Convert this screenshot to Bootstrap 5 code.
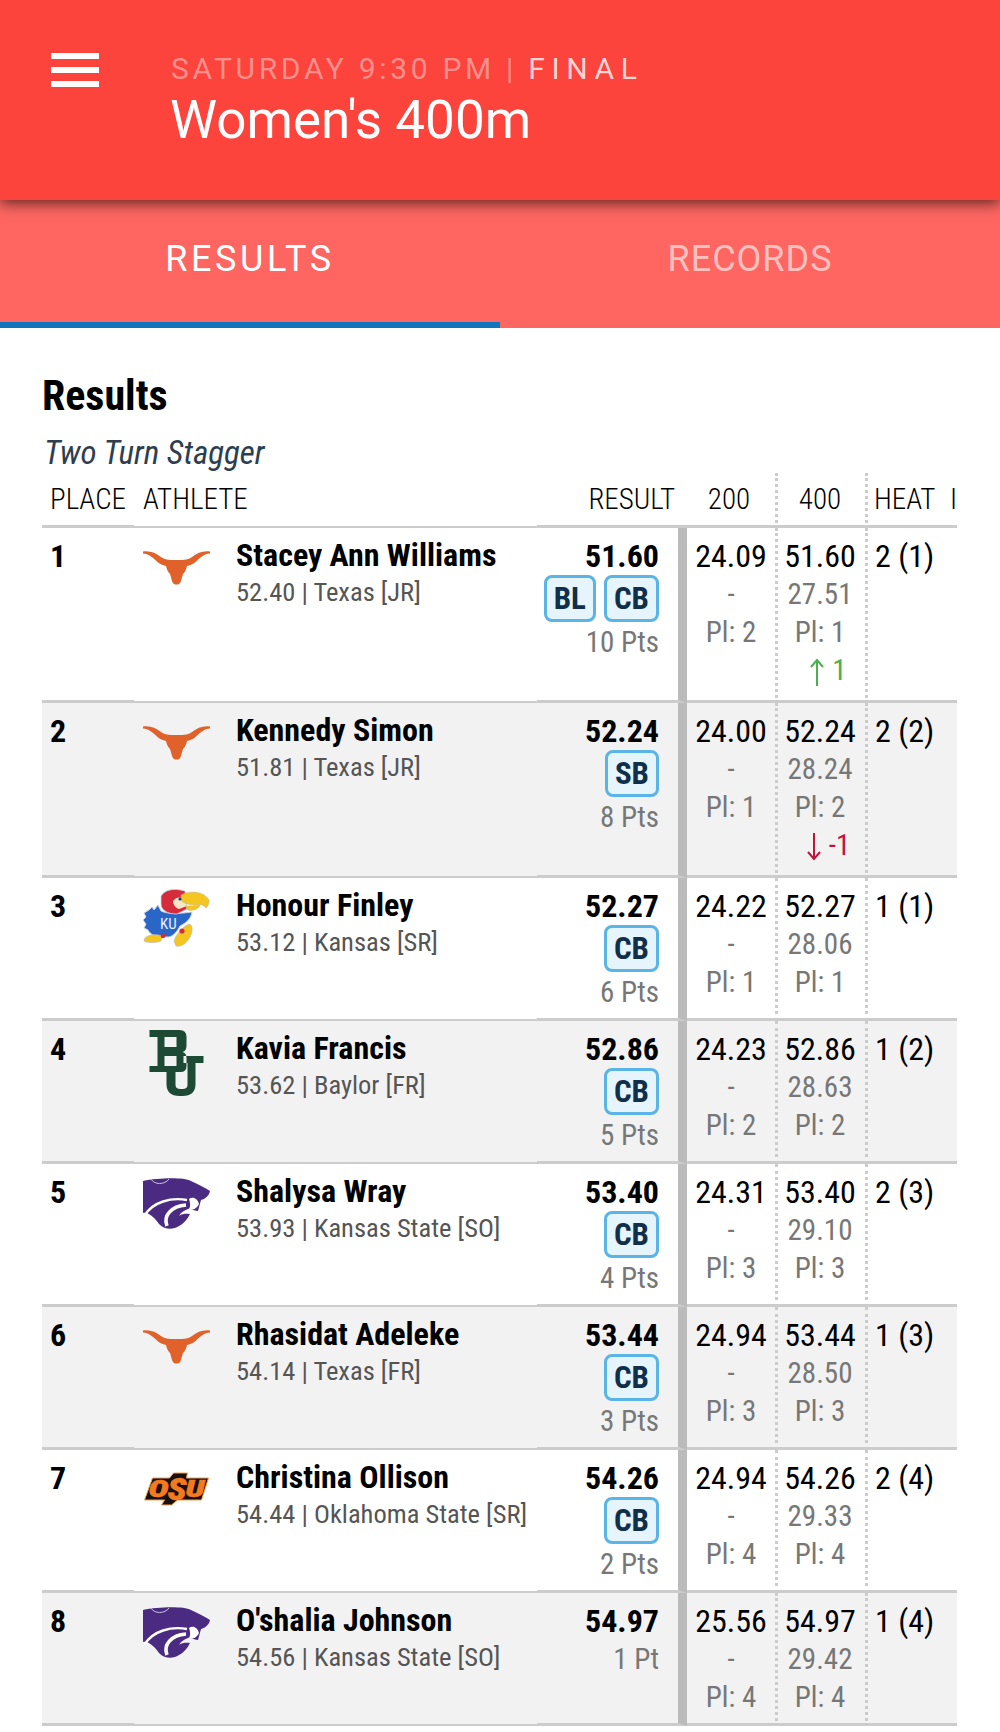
<!doctype html>
<html lang="en">
<head>
<meta charset="utf-8">
<title>Women's 400m</title>
<link href="https://cdn.jsdelivr.net/npm/bootstrap@5.3.0/dist/css/bootstrap.min.css" rel="stylesheet">
<style>
body{background:#fff;font-family:"Roboto Condensed",Roboto,sans-serif;font-stretch:75%;color:#000;}
.appbar{background:#fc433c;height:200px;position:relative;z-index:2;box-shadow:0 3px 14px rgba(0,0,0,.65);font-family:Roboto,sans-serif;font-stretch:100%;color:#fff;}
.burger{width:48px;margin:53px 0 0 51px;gap:8px;flex:none;}
.burger i{display:block;height:6px;background:#fff;}
.apptext{margin-left:72px;padding-top:51px;}
.kick{font-size:30px;line-height:36px;letter-spacing:3.7px;color:rgba(255,255,255,.42);}
.kick b{font-weight:400;color:rgba(255,255,255,.78);letter-spacing:6.6px;}
.ttl{font-size:53px;line-height:60px;color:#fff;margin-top:3px;margin-left:-1px;}
.tabbar{background:#ff6661;height:128px;font-family:Roboto,sans-serif;font-stretch:100%;}
.tabbar .nav-link{height:128px;padding:35px 0 0;font-size:36px;line-height:48px;letter-spacing:1px;color:rgba(255,255,255,.6);border-bottom:6px solid transparent;}
.tabbar .nav-link.active{color:#fff;letter-spacing:3.6px;border-bottom-color:#0f75bd;}
.pagebody{padding:44px 42px 0;}
.rhead{font-size:42px;line-height:48px;font-weight:700;margin:0;}
.rsub{font-size:33px;line-height:40px;font-style:italic;color:#2c3e50;margin:13px 0 0 2px;}
.tclip{overflow:hidden;width:915px;}
.rtab{table-layout:fixed;width:974px;border-collapse:separate;border-spacing:0;margin:0;font-size:32px;}
.rtab th,.rtab td{padding:0;background:transparent;box-shadow:none;vertical-align:top;border-bottom:3px solid #ccc;color:#000;}
.rtab th{font-weight:300;font-size:29px;line-height:36px;height:55px;padding-top:8px;}
.rtab td{line-height:40px;padding-top:8px;padding-bottom:7px;}
.rtab tr:nth-child(even) td{background:#f2f2f2;}
.rtab .ca{width:92px;padding-left:8px;}
.rtab .cb{width:403px;padding-left:9px;border-bottom-width:2px;}
.rtab .cc{width:150px;text-align:right;padding-right:19px;border-right:9px solid #bbb;}
.rtab th.cc{border-right:0;padding-right:12px;}
.rtab .cd{width:88px;text-align:center;}
.rtab th.cd{padding-right:4px;}
.rtab .ce{width:90px;text-align:center;border-left:3px dotted #ccc;padding-right:3px;}
.rtab th.ce{padding-right:3px;}
.rtab .cf{width:85px;padding-left:7px;border-left:3px dotted #ccc;}
.rtab th.cf{padding-left:6px;}
.rtab .cg{width:66px;}
.rtab td.ca{font-weight:700;}
.ath{gap:26px;}
.crest{width:67px;flex:none;display:block;margin-top:15px;}
.crest.kj{margin-top:3px;}
.crest.bay{margin-top:0;}
.crest.wc{margin-top:6px;}
.crest.os{margin-top:14px;}
.nm{font-weight:700;line-height:39px;}
.mt{font-size:26.5px;line-height:34px;color:#555;}
.val{line-height:40px;display:block;}
.strong{font-weight:700;}
.dim{display:block;color:#777;font-size:29px;line-height:37.5px;}
.tags{gap:8px;margin:-1px 0 1.5px;}
.tagx{display:block;border:3px solid #5ab4e5;background:#e6f4fc;color:#0f2f4a;font-weight:700;font-size:31px;line-height:41px;height:47px;border-radius:8px;padding:0 7px;}
.mv{display:block;font-size:29px;line-height:37.5px;margin:1px 0 3.5px;padding-left:17px;}
.mv svg{vertical-align:-6px;margin-right:8px;}
.up{color:#4caf50;}
.dn{color:#c2133f;}
</style>
</head>
<body>
<svg width="0" height="0" class="position-absolute">
<defs>
<symbol id="horn" viewBox="0 0 67 34"><path fill="#e0622a" d="M0,.5 C7,-.5 13,2 18,6 C21,8.5 25,9 33.5,9 C42,9 46,8.5 49,6 C54,2 60,-.5 67,.5 L67,2.5 C61,3 58,6 54,9.5 C52,12 49,14 44,15 C43,19 42,21 40,23 C39,26 38.5,28 38,30 C37,33 35.5,33.5 33.5,33.5 C31.5,33.5 30,33 29,30 C28.5,28 28,26 27,23 C25,21 24,19 23,15 C18,14 15,12 13,9.5 C9,6 6,3 0,2.5 Z"/></symbol>
<symbol id="hawk" viewBox="0 0 67 58">
<path fill="#2a66c8" stroke="#c9d3e6" stroke-width="1" d="M6,21 L9,18 L11,21 L15,16 L18,22 C24,25 36,25 49,23 C48,30 43,34 37,37 C34,43 30,47 26,48 L18,48 C12,48 7,45 5,41 L1,39 L3,35 L0,31 L3,28 L1,24 Z"/>
<path fill="#d62b3a" stroke="#c9d3e6" stroke-width=".8" d="M18,7 C22,0 32,-1 42,2 L44,20 L34,25 C24,25 18,21 18,15 Z"/>
<path fill="#f3e7c6" d="M30,12 C33,8 36,8 40,9 L44,17 L36,20 C32,19 30,15 30,12 Z"/>
<path fill="#f4c61f" stroke="#c9b56a" stroke-width=".6" d="M38,6 C45,2 60,1 66,11 C66,15 65,17 63,19 C61,15 56,15 52,16 C47,16 44,15 40,13 C38,11 38,9 38,6 Z"/>
<path fill="#f4c61f" stroke="#c9b56a" stroke-width=".6" d="M42,17 C48,17 54,17 57,16 C56,20 50,22 45,21 Z"/>
<circle cx="37" cy="10" r="1.6" fill="#1b3f7a"/>
<path fill="#f4c61f" stroke="#b9b9c4" stroke-width=".7" d="M2,49 C6,45 14,45 19,47 L18,52 C12,54 5,54 1,52 Z"/>
<path fill="#f4c61f" stroke="#b9b9c4" stroke-width=".7" d="M31,52 C33,46 39,38 46,35 C50,36 50,42 47,48 C43,55 38,58 33,57 Z"/>
<circle cx="39" cy="42" r="2.6" fill="#d62b3a"/>
<circle cx="20" cy="47" r="2.3" fill="#d62b3a"/>
<text x="17" y="40" font-family="Roboto,sans-serif" font-size="15" font-weight="400" fill="#eef2fb">KU</text>
</symbol>
<symbol id="bu" viewBox="0 0 54 68">
<path fill="#1d4a35" fill-rule="evenodd" d="M0,1 H30 Q37,1 37,8 V17 Q37,22 33,23 Q37,24 37,29 V37 Q37,43 31,43 H26 V56 Q26,60 31,60 H33 Q38,60 38,56 V34 H34 V27 H54 V34 H46 V55 Q46,67 33,67 H30 Q17,67 17,55 V43 H0 V37 H8 V8 H0 Z M15,8 V18 H27 V8 Z M15,27 V37 H27 V27 Z"/>
</symbol>
<symbol id="cat" viewBox="0 0 67 52">
<path fill="#4b2a82" d="M0,3 C15,0 40,-1 48,3 C55,6 62,10 67,13 C66,18 62,21 58,22 L55,33 C50,33 47,30 45,31 C42,32 38,34 36,38 C40,35 45,36 47,36 C44,42 40,46 36,48 C30,52 22,52 16,46 C10,38 5,34 0,35 Z"/>
<g fill="none" stroke="#fff">
<path stroke-width="2.4" d="M2,37 C10,24 28,19 44,22"/>
<path stroke-width="3.6" d="M24,48 C20,38 28,28 43,27"/>
<path stroke="#c9c3d8" stroke-width="1" d="M8,1 C11,7 22,7 26,1"/>
</g>
<path fill="#fff" d="M46,21 C50,18 55,21 56,26 C54,30 50,33 46,31 C48,28 47,24 46,21 Z"/>
</symbol>
<symbol id="osu" viewBox="0 0 66 34">
<path fill="#161010" stroke="#f4a24a" stroke-width="1" d="M9,6 H26 L30,1 H44 L43,6 H65 L58,28 H34 L28,33 H18 L21,28 H1 Z"/>
<g font-family="Roboto,sans-serif" font-style="italic" font-weight="900" fill="#f47a20" stroke="#f47a20" stroke-width=".5">
<text x="5" y="25" font-size="23" textLength="20" lengthAdjust="spacingAndGlyphs">O</text>
<text x="24" y="28" font-size="31" textLength="19" lengthAdjust="spacingAndGlyphs">S</text>
<text x="42" y="25" font-size="23" textLength="19" lengthAdjust="spacingAndGlyphs">U</text>
</g>
</symbol>
<symbol id="aup" viewBox="0 0 14 28"><path fill="none" stroke="#4caf50" stroke-width="2" d="M7,28 V2 M1,9 L7,2 L13,9"/></symbol>
<symbol id="adn" viewBox="0 0 14 28"><path fill="none" stroke="#c2133f" stroke-width="2" d="M7,0 V26 M1,19 L7,26 L13,19"/></symbol>
</defs>
</svg>

<header class="appbar d-flex">
  <div class="burger d-flex flex-column"><i></i><i></i><i></i></div>
  <div class="apptext">
    <div class="kick">SATURDAY 9:30 PM | <b>FINAL</b></div>
    <div class="ttl">Women's 400m</div>
  </div>
</header>
<ul class="nav nav-justified tabbar">
  <li class="nav-item"><a class="nav-link active" href="#">RESULTS</a></li>
  <li class="nav-item"><a class="nav-link" href="#">RECORDS</a></li>
</ul>

<main class="pagebody">
  <h1 class="rhead">Results</h1>
  <p class="rsub mb-0">Two Turn Stagger</p>
  <div class="tclip">
  <table class="table rtab">
    <thead><tr>
      <th class="ca">PLACE</th><th class="cb">ATHLETE</th><th class="cc">RESULT</th><th class="cd">200</th><th class="ce">400</th><th class="cf">HEAT</th><th class="cg">I</th>
    </tr></thead>
    <tbody>
    <tr><td class="ca">1</td><td class="cb"><div class="ath d-flex"><svg class="crest" height="34"><use href="#horn"/></svg><div><div class="nm">Stacey Ann Williams</div><div class="mt">52.40 | Texas [JR]</div></div></div></td>
      <td class="cc"><span class="val strong">51.60</span><div class="tags d-flex justify-content-end"><span class="tagx">BL</span><span class="tagx">CB</span></div><span class="dim">10 Pts</span></td>
      <td class="cd"><span class="val">24.09</span><span class="dim">-</span><span class="dim">Pl: 2</span></td>
      <td class="ce"><span class="val">51.60</span><span class="dim">27.51</span><span class="dim">Pl: 1</span><span class="mv up"><svg width="14" height="28"><use href="#aup"/></svg>1</span></td>
      <td class="cf"><span class="val">2 (1)</span></td><td class="cg"></td></tr>
    <tr><td class="ca">2</td><td class="cb"><div class="ath d-flex"><svg class="crest" height="34"><use href="#horn"/></svg><div><div class="nm">Kennedy Simon</div><div class="mt">51.81 | Texas [JR]</div></div></div></td>
      <td class="cc"><span class="val strong">52.24</span><div class="tags d-flex justify-content-end"><span class="tagx">SB</span></div><span class="dim">8 Pts</span></td>
      <td class="cd"><span class="val">24.00</span><span class="dim">-</span><span class="dim">Pl: 1</span></td>
      <td class="ce"><span class="val">52.24</span><span class="dim">28.24</span><span class="dim">Pl: 2</span><span class="mv dn"><svg width="14" height="28"><use href="#adn"/></svg>-1</span></td>
      <td class="cf"><span class="val">2 (2)</span></td><td class="cg"></td></tr>
    <tr><td class="ca">3</td><td class="cb"><div class="ath d-flex"><svg class="crest kj" height="58"><use href="#hawk"/></svg><div><div class="nm">Honour Finley</div><div class="mt">53.12 | Kansas [SR]</div></div></div></td>
      <td class="cc"><span class="val strong">52.27</span><div class="tags d-flex justify-content-end"><span class="tagx">CB</span></div><span class="dim">6 Pts</span></td>
      <td class="cd"><span class="val">24.22</span><span class="dim">-</span><span class="dim">Pl: 1</span></td>
      <td class="ce"><span class="val">52.27</span><span class="dim">28.06</span><span class="dim">Pl: 1</span></td>
      <td class="cf"><span class="val">1 (1)</span></td><td class="cg"></td></tr>
    <tr><td class="ca">4</td><td class="cb"><div class="ath d-flex"><svg class="crest bay" height="68"><use href="#bu"/></svg><div><div class="nm">Kavia Francis</div><div class="mt">53.62 | Baylor [FR]</div></div></div></td>
      <td class="cc"><span class="val strong">52.86</span><div class="tags d-flex justify-content-end"><span class="tagx">CB</span></div><span class="dim">5 Pts</span></td>
      <td class="cd"><span class="val">24.23</span><span class="dim">-</span><span class="dim">Pl: 2</span></td>
      <td class="ce"><span class="val">52.86</span><span class="dim">28.63</span><span class="dim">Pl: 2</span></td>
      <td class="cf"><span class="val">1 (2)</span></td><td class="cg"></td></tr>
    <tr><td class="ca">5</td><td class="cb"><div class="ath d-flex"><svg class="crest wc" height="52"><use href="#cat"/></svg><div><div class="nm">Shalysa Wray</div><div class="mt">53.93 | Kansas State [SO]</div></div></div></td>
      <td class="cc"><span class="val strong">53.40</span><div class="tags d-flex justify-content-end"><span class="tagx">CB</span></div><span class="dim">4 Pts</span></td>
      <td class="cd"><span class="val">24.31</span><span class="dim">-</span><span class="dim">Pl: 3</span></td>
      <td class="ce"><span class="val">53.40</span><span class="dim">29.10</span><span class="dim">Pl: 3</span></td>
      <td class="cf"><span class="val">2 (3)</span></td><td class="cg"></td></tr>
    <tr><td class="ca">6</td><td class="cb"><div class="ath d-flex"><svg class="crest" height="34"><use href="#horn"/></svg><div><div class="nm">Rhasidat Adeleke</div><div class="mt">54.14 | Texas [FR]</div></div></div></td>
      <td class="cc"><span class="val strong">53.44</span><div class="tags d-flex justify-content-end"><span class="tagx">CB</span></div><span class="dim">3 Pts</span></td>
      <td class="cd"><span class="val">24.94</span><span class="dim">-</span><span class="dim">Pl: 3</span></td>
      <td class="ce"><span class="val">53.44</span><span class="dim">28.50</span><span class="dim">Pl: 3</span></td>
      <td class="cf"><span class="val">1 (3)</span></td><td class="cg"></td></tr>
    <tr><td class="ca">7</td><td class="cb"><div class="ath d-flex"><svg class="crest os" height="34"><use href="#osu"/></svg><div><div class="nm">Christina Ollison</div><div class="mt">54.44 | Oklahoma State [SR]</div></div></div></td>
      <td class="cc"><span class="val strong">54.26</span><div class="tags d-flex justify-content-end"><span class="tagx">CB</span></div><span class="dim">2 Pts</span></td>
      <td class="cd"><span class="val">24.94</span><span class="dim">-</span><span class="dim">Pl: 4</span></td>
      <td class="ce"><span class="val">54.26</span><span class="dim">29.33</span><span class="dim">Pl: 4</span></td>
      <td class="cf"><span class="val">2 (4)</span></td><td class="cg"></td></tr>
    <tr><td class="ca">8</td><td class="cb"><div class="ath d-flex"><svg class="crest wc" height="52"><use href="#cat"/></svg><div><div class="nm">O'shalia Johnson</div><div class="mt">54.56 | Kansas State [SO]</div></div></div></td>
      <td class="cc"><span class="val strong">54.97</span><span class="dim">1 Pt</span></td>
      <td class="cd"><span class="val">25.56</span><span class="dim">-</span><span class="dim">Pl: 4</span></td>
      <td class="ce"><span class="val">54.97</span><span class="dim">29.42</span><span class="dim">Pl: 4</span></td>
      <td class="cf"><span class="val">1 (4)</span></td><td class="cg"></td></tr>
    </tbody>
  </table>
  </div>
</main>
</body>
</html>
